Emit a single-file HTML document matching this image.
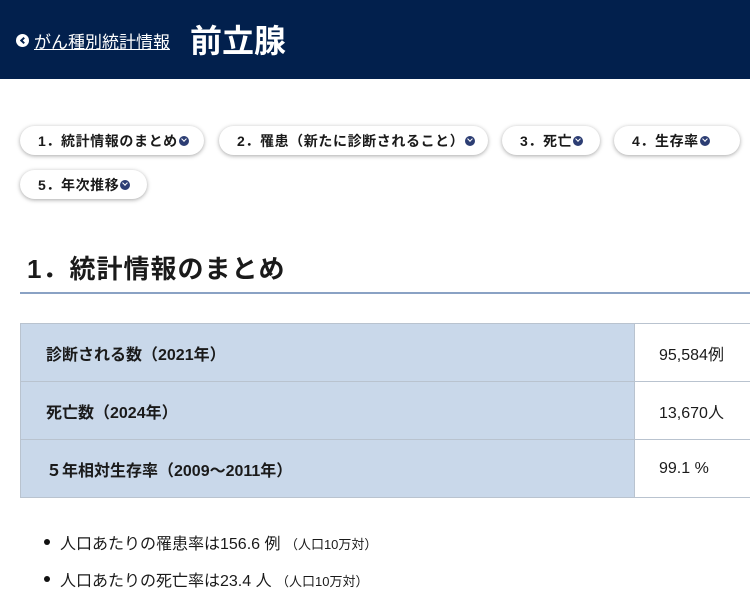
<!DOCTYPE html>
<html><head><meta charset="utf-8"><style>
*{margin:0;padding:0;box-sizing:border-box}
body{width:750px;height:607px;overflow:hidden;background:#fff;font-family:"Liberation Sans","Noto Sans CJK JP",sans-serif;color:#1a1a1a;position:relative}
.hd{position:absolute;left:0;top:0;width:750px;height:79px;background:#02204d}
.back{position:absolute;left:16px;top:28px;color:#fff;font-size:17px;text-decoration:underline;display:flex;align-items:center}
.back i{display:inline-block;width:13px;height:13px;border-radius:50%;background:#fff;margin-right:5px;position:relative}
.back i:after{content:"";position:absolute;left:5px;top:4px;width:3px;height:3px;border-left:2px solid #02204d;border-bottom:2px solid #02204d;transform:rotate(45deg)}
.tt{position:absolute;left:190px;top:16px;color:#fff;font-size:32px;font-weight:bold}
.pill{position:absolute;height:29px;border-radius:15px;background:#fff;box-shadow:0 1px 4px rgba(0,0,0,.35);font-size:14px;font-weight:bold;display:flex;align-items:center;padding-left:18px;white-space:nowrap;letter-spacing:0.6px}
.pill b{display:inline-block;width:10px;height:10px;border-radius:50%;background:#2c3d73;margin-left:1px;position:relative}
.pill b:after{content:"";position:absolute;left:3px;top:1.5px;width:3px;height:3px;border-right:1.5px solid #fff;border-bottom:1.5px solid #fff;transform:rotate(45deg)}
h2{position:absolute;left:27px;top:249px;font-size:26px;font-weight:bold;letter-spacing:1px}
.ln{position:absolute;left:20px;top:292px;width:730px;height:2px;background:#8aa2c4}
table{position:absolute;left:20px;top:323px;border-collapse:collapse;width:735px}
td{height:58px;border:1px solid #b9c3cf;font-size:16px}
td.k{width:614px;background:#c9d8ea;font-weight:bold;padding-left:25px}
td.v{padding-left:24px}
ul{position:absolute;left:44px;top:530px;list-style:none}
li{font-size:16px;height:37px;position:relative;padding-left:16px}
li:before{content:"";position:absolute;left:0;top:9px;width:6px;height:6px;border-radius:50%;background:#111}
li small{font-size:13px}
</style></head><body>
<div class="hd"><div class="back"><i></i>がん種別統計情報</div><div class="tt">前立腺</div></div>
<div class="pill" style="left:20px;top:126px;width:184px">1．統計情報のまとめ<b></b></div>
<div class="pill" style="left:219px;top:126px;width:269px">2．罹患（新たに診断されること）<b></b></div>
<div class="pill" style="left:502px;top:126px;width:98px">3．死亡<b></b></div>
<div class="pill" style="left:614px;top:126px;width:126px">4．生存率<b></b></div>
<div class="pill" style="left:20px;top:170px;width:127px">5．年次推移<b></b></div>
<h2>1．統計情報のまとめ</h2>
<div class="ln"></div>
<table>
<tr><td class="k">診断される数（2021年）</td><td class="v">95,584例</td></tr>
<tr><td class="k">死亡数（2024年）</td><td class="v">13,670人</td></tr>
<tr><td class="k">５年相対生存率（2009～2011年）</td><td class="v">99.1 %</td></tr>
</table>
<ul>
<li>人口あたりの罹患率は156.6 例 <small>（人口10万対）</small></li>
<li>人口あたりの死亡率は23.4 人 <small>（人口10万対）</small></li>
</ul>
</body></html>
